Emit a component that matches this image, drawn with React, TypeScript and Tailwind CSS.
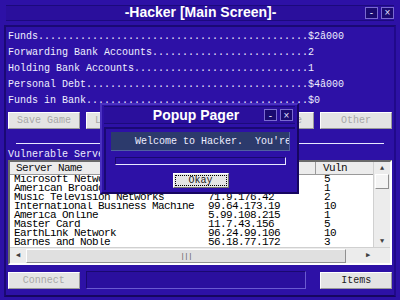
import React from "react";

const mono = "font-['Liberation_Mono','DejaVu_Sans_Mono',monospace]";

const stats: [string, string][] = [
  ["Funds", "$2â000"],
  ["Forwarding Bank Accounts", "2"],
  ["Holding Bank Accounts", "1"],
  ["Personal Debt", "$4â000"],
  ["Funds in Bank", "$0"],
];

const servers: [string, string, string][] = [
  ["Microsoft Network", "12.44.201.7", "5"],
  ["American Broadcasting Company", "45.120.8.33", "1"],
  ["Music Television Networks", "71.9.176.42", "2"],
  ["International Business Machine", "99.64.173.19", "10"],
  ["America Online", "5.99.108.215", "1"],
  ["Master Card", "11.7.43.156", "5"],
  ["EarthLink Network", "96.24.99.106", "10"],
  ["Barnes and Noble", "56.18.77.172", "3"],
];

const WinButtons = ({ close }: { close: string }) => (
  <div className="flex gap-[3px]">
    <div className="w-[13px] h-[12px] border border-[#7a6ad0] bg-[#1a0a70] text-[#e0e0ff] text-[10px] leading-[9px] flex items-center justify-center font-['Liberation_Sans',sans-serif]">
      -
    </div>
    <div className="w-[13px] h-[12px] border border-[#7a6ad0] bg-[#1a0a70] text-[#e0e0ff] text-[10px] leading-[9px] flex items-center justify-center font-['Liberation_Sans',sans-serif]">
      {close}
    </div>
  </div>
);

const GrayButton = ({ label, enabled }: { label: string; enabled?: boolean }) => (
  <div
    className={`w-[72px] h-[17px] bg-[#e4e4e4] border border-t-white border-l-white border-r-[#9a9a9a] border-b-[#9a9a9a] flex items-center justify-center text-[10px] ${
      enabled ? "text-[#202020]" : "text-[#a8a8a8]"
    }`}
  >
    {label}
  </div>
);

export default function App() {
  return (
    <div className={`w-[400px] h-[300px] bg-[#2d11a6] relative overflow-hidden flex flex-col ${mono}`}>
      {/* title bar */}
      <div className="h-[25px] flex items-center px-[6px]">
        <div className="flex-1 h-[16px] border-t border-b border-[#1c0a7c] bg-[#2a0f9c] flex items-center">
          <div className="flex-1 text-center text-white font-bold text-[14px] font-['Liberation_Sans',Arial,sans-serif] pl-[30px]">
            -Hacker [Main Screen]-
          </div>
          <WinButtons close="×" />
        </div>
      </div>

      {/* main panel */}
      <div className="flex-1 mx-[4px] mb-[3px] border-t-2 border-l-2 border-[#1a0974] border-r-2 border-r-[#20098a] border-b-2 border-b-[#160660] px-[2px] flex flex-col">
        <div className="pt-[2px] text-[10px] text-[#eeeeff] leading-[16px]">
          {stats.map(([label, value]) => (
            <div key={label} className="whitespace-pre h-[16px]">
              {label + ".".repeat(50 - label.length) + value}
            </div>
          ))}
        </div>

        <div className="flex gap-[6px] mt-[3px]">
          <GrayButton label="Save Game" />
          <GrayButton label="Load Game" />
          <GrayButton label="Finance" />
          <GrayButton label="Hardware" />
          <GrayButton label="Other" />
        </div>

        <div className="mx-[8px] mt-[14px] h-px bg-[#e8e8ff]" />

        <div className="mt-[5px] text-[10px] text-[#eeeeff] leading-[11px]">Vulnerable Servers</div>

        {/* server list */}
        <div className="h-[105px] border-2 border-t-[#6a6a6a] border-l-[#6a6a6a] border-r-white border-b-white bg-white flex flex-col">
          <div className="flex flex-1 min-h-0">
            <div className="flex-1 flex flex-col min-w-0">
              <div className="h-[13px] flex bg-[#ececec] text-[11px] tracking-[-0.6px] leading-[12px] text-[#101010] border-b border-[#9a9a9a]">
                <div className="w-[194px] pl-[6px] border-r border-[#9a9a9a]">Server Name</div>
                <div className="w-[112px] pl-[4px] border-r border-[#9a9a9a]">IP Address</div>
                <div className="flex-1 pl-[7px]">Vuln</div>
              </div>
              <div className="flex-1 overflow-hidden text-[11px] tracking-[-0.6px] leading-[9px] text-black">
                {servers.map(([name, ip, vuln]) => (
                  <div key={name} className="flex h-[9px] whitespace-nowrap">
                    <div className="w-[194px] pl-[4px] overflow-hidden">{name}</div>
                    <div className="w-[112px] pl-[4px]">{ip}</div>
                    <div className="flex-1 pl-[8px]">{vuln}</div>
                  </div>
                ))}
              </div>
            </div>
            {/* vertical scrollbar */}
            <div className="w-[17px] bg-[#ececec] flex flex-col items-center border-l border-[#d0d0d0]">
              <div className="h-[12px] text-[7px] leading-[12px] text-[#404040]">▲</div>
              <div className="w-[14px] h-[15px] bg-[#f4f4f4] border border-t-white border-l-white border-r-[#909090] border-b-[#909090]" />
              <div className="flex-1" />
              <div className="h-[12px] text-[7px] leading-[12px] text-[#404040]">▼</div>
            </div>
          </div>
          {/* horizontal scrollbar */}
          <div className="h-[16px] bg-[#ececec] flex items-center border-t border-[#d0d0d0]">
            <div className="w-[16px] text-center text-[7px] text-[#404040]">◀</div>
            <div className="w-[320px] h-[14px] bg-[#e0e0e0] border border-t-white border-l-white border-r-[#909090] border-b-[#909090] flex items-center justify-center text-[8px] text-[#606060] tracking-[-1px]">
              |||
            </div>
            <div className="flex-1 text-center text-[7px] text-[#404040]">▶</div>
          </div>
        </div>

        {/* bottom row */}
        <div className="flex gap-[6px] mt-[6px] items-center">
          <GrayButton label="Connect" />
          <div className="w-[222px] h-[18px] bg-[#2a0f9e] border border-t-[#1a0870] border-l-[#1a0870] border-r-[#6a5ad0] border-b-[#6a5ad0]" />
          <div className="w-[2px]" />
          <GrayButton label="Items" enabled />
        </div>
      </div>

      {/* popup pager */}
      <div className="absolute left-[100px] top-[103px] w-[199px] h-[91px] bg-[#2d11a6] border-2 border-t-[#4a30c0] border-l-[#4a30c0] border-r-[#160660] border-b-[#160660] flex flex-col">
        <div className="h-[18px] mx-[2px] mt-[1px] border-t border-b border-[#1c0a7c] bg-[#2a0f9c] flex items-center">
          <div className="flex-1 text-center text-white font-bold text-[14px] font-['Liberation_Sans',Arial,sans-serif] pl-[24px]">
            Popup Pager
          </div>
          <div className="pr-[2px]">
            <WinButtons close="×" />
          </div>
        </div>
        <div className="flex-1 mx-[2px] mb-[2px] mt-[3px] border-t-2 border-l-2 border-[#1a0974] px-[5px] flex flex-col">
          <div className="mt-[3px] h-[19px] bg-[#2c3a6c] border-b border-r border-[#5060a0] text-[10px] text-[#eeeeff] leading-[19px] whitespace-pre overflow-hidden pl-[24px]">
            Welcome to Hacker.  You're
          </div>
          <div className="mt-[6px] mx-[4px] h-[8px] border-b border-r border-[#e8e8ff] border-t border-l border-t-[#1a0870] border-l-[#1a0870]" />
          <div className="mt-[8px] flex justify-center">
            <div className="w-[56px] h-[15px] bg-[#e4e4e4] border border-t-white border-l-white border-r-[#707070] border-b-[#707070] p-[1px]">
              <div className="h-full border border-dotted border-black flex items-center justify-center text-[10px] text-[#202020] leading-none">
                Okay
              </div>
            </div>
          </div>
        </div>
      </div>
    </div>
  );
}
